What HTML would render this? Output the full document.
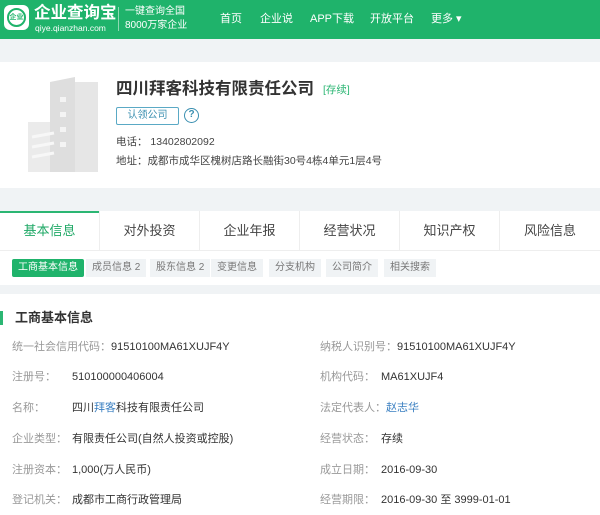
<!DOCTYPE html>
<html><head><meta charset="utf-8"><style>
*{margin:0;padding:0;box-sizing:border-box}
body{width:600px;height:515px;overflow:hidden;background:#f0f3f5;font-family:"Liberation Sans","Noto Sans CJK SC",sans-serif;color:#333;position:relative}
.a{position:absolute;white-space:nowrap;line-height:14px}
#hd{position:absolute;left:0;top:0;width:600px;height:39px;background:#1fb36b}
#hd .a{color:#fff}
.nav{font-size:11px;top:12px}
#co{position:absolute;left:0;top:62px;width:600px;height:126px;background:#fff}
#tabs{position:absolute;left:0;top:211px;width:600px;height:40px;background:#fff;border-bottom:1px solid #eee}
.tab{position:absolute;top:0;width:100px;height:40px;line-height:40px;text-align:center;font-size:13px;color:#444;border-right:1px solid #eee}
#sub{position:absolute;left:0;top:251px;width:600px;height:34px;background:#fff}
.st{position:absolute;top:8px;height:18px;line-height:18px;font-size:10px;color:#777;background:#f0f3f5;padding:0 6px}
#info{position:absolute;left:0;top:294px;width:600px;height:221px;background:#fff}
.l{font-size:11px;color:#999}
.v{font-size:11px;color:#333}
</style></head><body>
<div id="hd">
 <div class="a" style="left:4px;top:5px;width:25px;height:25px;background:#fff;border-radius:6px"></div>
 <div class="a" style="left:7px;top:8px;width:19px;height:19px;border:2px solid #1fb36b;border-radius:50%;color:#1fb36b;font-size:7px;line-height:15px;text-align:center;font-weight:bold">企业</div>
 <div class="a" style="left:34px;top:3px;font-size:16.5px;line-height:20px;font-weight:bold">企业查询宝</div>
 <div class="a" style="left:35px;top:23px;font-size:8.5px;line-height:10px">qiye.qianzhan.com</div>
 <div class="a" style="left:118px;top:7px;width:1px;height:24px;background:#8fd9b3"></div>
 <div class="a" style="left:125px;top:5px;font-size:10px;line-height:14px">一键查询全国<br>8000万家企业</div>
 <div class="a nav" style="left:220px">首页</div>
 <div class="a nav" style="left:260px">企业说</div>
 <div class="a nav" style="left:310px">APP下载</div>
 <div class="a nav" style="left:370px">开放平台</div>
 <div class="a nav" style="left:431px">更多 ▾</div>
</div>
<div id="co">
 <svg class="a" style="left:20px;top:15px" width="80" height="95" viewBox="0 0 80 95">
  <rect x="8" y="45" width="30" height="50" fill="#ebebeb"/>
  <rect x="30" y="5" width="48" height="90" fill="#e6e6e6"/>
  <polygon points="30,5 55,0 55,95 30,95" fill="#dedede"/>
  <rect x="40" y="20" width="6" height="5" fill="#f4f4f4"/><rect x="40" y="35" width="6" height="5" fill="#f4f4f4"/><rect x="40" y="50" width="6" height="5" fill="#f4f4f4"/><rect x="40" y="65" width="6" height="5" fill="#f4f4f4"/>
  <path d="M12 60 L34 56 M12 70 L34 66 M12 80 L34 76" stroke="#f7f7f7" stroke-width="3"/>
 </svg>
 <div class="a" style="left:116px;top:17px;font-size:16.5px;line-height:20px;font-weight:bold;color:#333">四川拜客科技有限责任公司</div>
 <div class="a" style="left:323px;top:21px;font-size:10.5px;color:#2bb673">[存续]</div>
 <div class="a" style="left:116px;top:45px;width:63px;height:18px;border:1px solid #5aa9c5;border-radius:2px;font-size:10px;color:#3a8fb0;text-align:center;line-height:16px">认领公司</div>
 <div class="a" style="left:184px;top:46px;width:15px;height:15px;border:1.5px solid #3a8fb0;border-radius:50%;font-size:10px;color:#3a8fb0;text-align:center;line-height:12px;font-weight:bold">?</div>
 <div class="a" style="left:116px;top:73px;font-size:10.5px;color:#444">电话： 13402802092</div>
 <div class="a" style="left:116px;top:92px;font-size:10.5px;color:#444">地址：成都市成华区槐树店路长融街30号4栋4单元1层4号</div>
</div>
<div id="tabs">
 <div class="a" style="left:0;top:0;width:99px;height:2px;background:#2bb673"></div>
 <div class="tab" style="left:0;color:#1fa866">基本信息</div>
 <div class="tab" style="left:100px">对外投资</div>
 <div class="tab" style="left:200px">企业年报</div>
 <div class="tab" style="left:300px">经营状况</div>
 <div class="tab" style="left:400px">知识产权</div>
 <div class="tab" style="left:500px;border:none">风险信息</div>
</div>
<div id="sub">
 <div class="st" style="left:12px;background:#1fb36b;color:#fff;border-radius:2px">工商基本信息</div>
 <div class="st" style="left:86px">成员信息 2</div>
 <div class="st" style="left:150px">股东信息 2</div>
 <div class="st" style="left:211px">变更信息</div>
 <div class="st" style="left:269px">分支机构</div>
 <div class="st" style="left:326px">公司简介</div>
 <div class="st" style="left:384px">相关搜索</div>
</div>
<div id="info">
 <div class="a" style="left:0;top:17px;width:3px;height:14px;background:#2bb673"></div>
 <div class="a" style="left:15px;top:17px;font-size:13px;font-weight:bold">工商基本信息</div>
 <div class="a l" style="left:12px;top:46px">统一社会信用代码：<span class="v">91510100MA61XUJF4Y</span></div>
 <div class="a l" style="left:320px;top:46px">纳税人识别号：<span class="v">91510100MA61XUJF4Y</span></div>
 <div class="a l" style="left:12px;top:76px">注册号：</div><div class="a v" style="left:72px;top:76px">510100000406004</div>
 <div class="a l" style="left:320px;top:76px">机构代码：</div><div class="a v" style="left:381px;top:76px">MA61XUJF4</div>
 <div class="a l" style="left:12px;top:107px">名称：</div><div class="a v" style="left:72px;top:107px">四川<span style="color:#3a7fc1">拜客</span>科技有限责任公司</div>
 <div class="a l" style="left:320px;top:107px">法定代表人：<span style="color:#3a7fc1">赵志华</span></div>
 <div class="a l" style="left:12px;top:138px">企业类型：</div><div class="a v" style="left:72px;top:138px">有限责任公司(自然人投资或控股)</div>
 <div class="a l" style="left:320px;top:138px">经营状态：</div><div class="a v" style="left:381px;top:138px">存续</div>
 <div class="a l" style="left:12px;top:169px">注册资本：</div><div class="a v" style="left:72px;top:169px">1,000(万人民币)</div>
 <div class="a l" style="left:320px;top:169px">成立日期：</div><div class="a v" style="left:381px;top:169px">2016-09-30</div>
 <div class="a l" style="left:12px;top:199px">登记机关：</div><div class="a v" style="left:72px;top:199px">成都市工商行政管理局</div>
 <div class="a l" style="left:320px;top:199px">经营期限：</div><div class="a v" style="left:381px;top:199px">2016-09-30 至 3999-01-01</div>
</div>
</body></html>
